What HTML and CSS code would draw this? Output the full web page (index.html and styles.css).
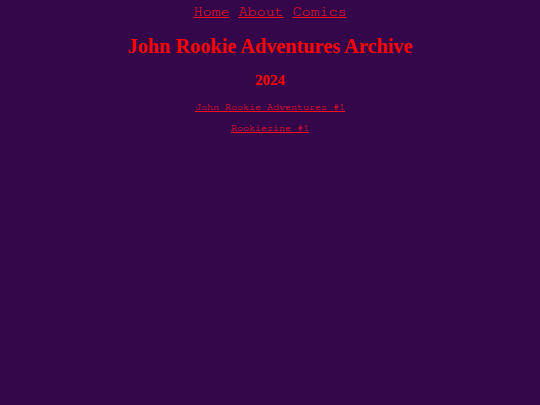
FILE: index.html
```html
<!DOCTYPE html>
<html lang="en">
<head>
<meta charset="utf-8">
<title>John Rookie Adventures Archive</title>
<link rel="stylesheet" href="styles.css">
</head>
<body>
<nav class="nav"><a href="#">Home</a> <a href="#">About</a> <a href="#">Comics</a></nav>
<h1 class="title">John Rookie Adventures Archive</h1>
<h2 class="year">2024</h2>
<ul class="list">
<li><a href="#">John Rookie Adventures #1</a></li>
<li><a href="#">Rookiezine #1</a></li>
</ul>
</body>
</html>
```
FILE: styles.css
```css
html, body {
  background: #33074a;
}
body {
  margin: 0;
  color: #ff0000;
  text-align: center;
  font-family: "Liberation Serif", serif;
}
a {
  color: #ff1020;
}
.nav {
  margin: 3px 0 0;
  font-family: "Nimbus Mono PS", "FreeMono", "Courier New", "Liberation Mono", monospace;
  font-size: 15px;
  line-height: 18px;
}
.title {
  margin: 13px 0 0;
  font-size: 20.3px;
  line-height: 24px;
  font-weight: bold;
}
.year {
  margin: 13px 0 0;
  font-size: 15px;
  line-height: 19px;
  font-weight: bold;
}
.list {
  list-style: none;
  margin: 11px 0 0;
  padding: 0;
  display: flex;
  flex-direction: column;
  gap: 9px;
  font-family: "Nimbus Mono PS", "FreeMono", "Courier New", "Liberation Mono", monospace;
  font-size: 10px;
  line-height: 12px;
}
.list a {
  color: #ff1020;
}
```
